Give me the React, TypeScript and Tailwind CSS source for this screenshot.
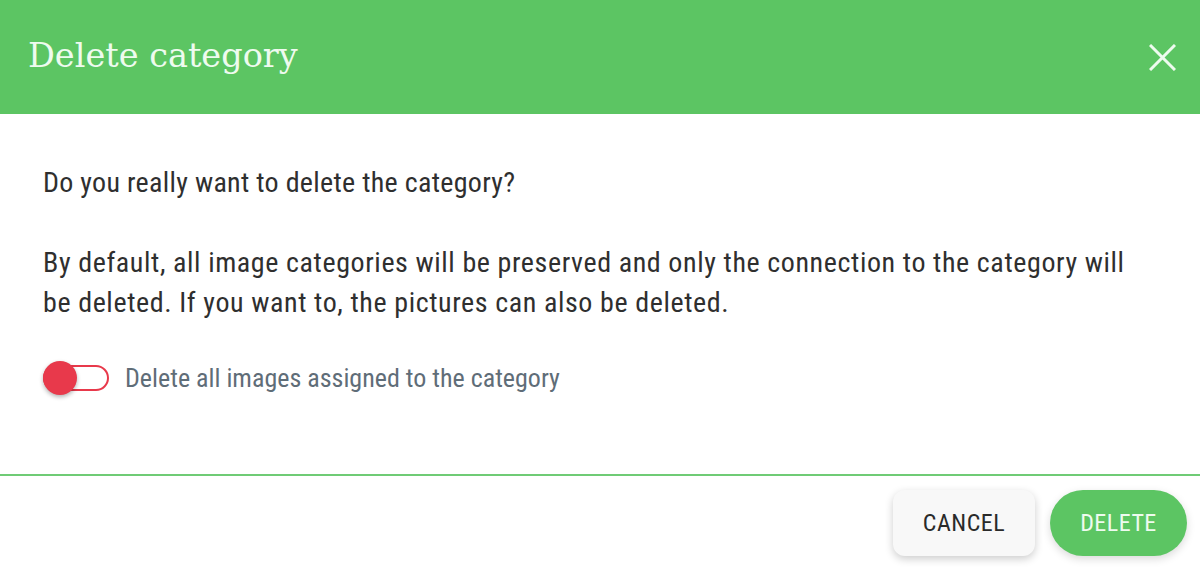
import { useState } from "react";

const BODY_FONT = { fontFamily: "Roboto, 'Noto Sans', sans-serif", fontStretch: "75%" } as const;

export default function App() {
  const [removeImages, setRemoveImages] = useState(true);

  return (
    <div className="flex h-[570px] w-[1200px] flex-col overflow-hidden bg-white" style={BODY_FONT}>
      <header className="flex h-[114px] shrink-0 items-center justify-between bg-[#5cc563] pl-[28px] pr-[18px]">
        <h1
          className="pb-[2px] text-[33.5px] font-normal text-[#eefbef]"
          style={{ fontFamily: "'DejaVu Serif', 'Liberation Serif', serif", fontStretch: "normal" }}
        >
          Delete category
        </h1>
        <button className="flex h-[40px] w-[40px] items-center justify-center text-[#eefbef]" aria-label="Close">
          <svg width="27" height="27" viewBox="0 0 27 27" fill="none" stroke="currentColor" strokeWidth="3">
            <path d="M1 1 L26 26 M26 1 L1 26" />
          </svg>
        </button>
      </header>

      <main className="flex-1 pl-[43px] pr-[62px] pt-[49px] text-[28px] leading-[40px] tracking-[0.3px] text-[#2f2f2f]">
        <p>Do you really want to delete the category?</p>
        <p className="mt-[40px] tracking-[0.6px]">
          By default, all image categories will be preserved and only the connection to the category will be
          deleted. If you want to, the pictures can also be deleted.
        </p>

        <label className="mt-[35px] flex cursor-pointer items-center gap-[16px]">
          <button
            type="button"
            onClick={() => setRemoveImages((v) => !v)}
            className="relative h-[26px] w-[66px] rounded-full border-2 border-[#e8394b] bg-white"
          >
            <span
              className={
                removeImages
                  ? "absolute left-[-2px] top-1/2 h-[34px] w-[34px] -translate-y-1/2 rounded-full bg-[#e8394b] shadow-[0_2px_4px_rgba(0,0,0,0.3)]"
                  : "absolute right-[-2px] top-1/2 h-[34px] w-[34px] -translate-y-1/2 rounded-full bg-[#e8394b] shadow-[0_2px_4px_rgba(0,0,0,0.3)]"
              }
            />
          </button>
          <span className="text-[26px] tracking-normal text-[#5f6d78]">Delete all images assigned to the category</span>
        </label>
      </main>

      <footer className="flex h-[96px] shrink-0 items-center justify-end gap-[15px] border-t-2 border-[#6fcb75] pr-[13px]">
        <button className="h-[66px] w-[142px] rounded-[12px] bg-[#f8f8f8] text-[24px] tracking-[0.5px] text-[#2a2a2a] shadow-[0_3px_8px_rgba(0,0,0,0.2)]">
          CANCEL
        </button>
        <button className="h-[66px] w-[137px] rounded-full bg-[#5cc563] text-[24px] tracking-[0.5px] text-[#eefbef] shadow-[0_3px_8px_rgba(0,0,0,0.15)]">
          DELETE
        </button>
      </footer>
    </div>
  );
}
